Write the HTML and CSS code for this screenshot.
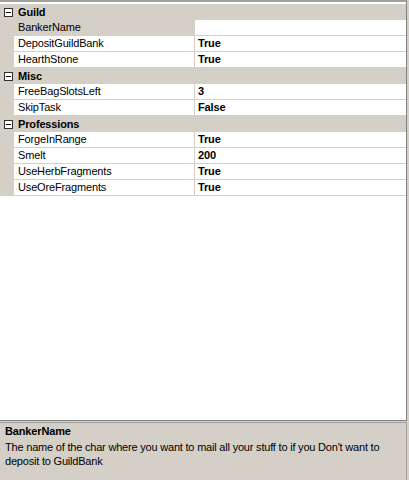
FILE: index.html
```html
<!DOCTYPE html>
<html>
<head>
<meta charset="utf-8">
<link rel="stylesheet" href="styles.css">
</head>
<body>
<div class="window">
  <div class="grid">
    <div class="cat"><span class="box"><span class="minus"></span></span><span class="cat-name">Guild</span></div>
    <div class="row selected"><span class="margin"></span><span class="name">BankerName</span><span class="value"></span></div>
    <div class="row"><span class="margin"></span><span class="name">DepositGuildBank</span><span class="value">True</span></div>
    <div class="row"><span class="margin"></span><span class="name">HearthStone</span><span class="value">True</span></div>
    <div class="cat"><span class="box"><span class="minus"></span></span><span class="cat-name">Misc</span></div>
    <div class="row"><span class="margin"></span><span class="name">FreeBagSlotsLeft</span><span class="value">3</span></div>
    <div class="row"><span class="margin"></span><span class="name">SkipTask</span><span class="value">False</span></div>
    <div class="cat"><span class="box"><span class="minus"></span></span><span class="cat-name">Professions</span></div>
    <div class="row"><span class="margin"></span><span class="name">ForgeInRange</span><span class="value">True</span></div>
    <div class="row"><span class="margin"></span><span class="name">Smelt</span><span class="value">200</span></div>
    <div class="row"><span class="margin"></span><span class="name">UseHerbFragments</span><span class="value">True</span></div>
    <div class="row"><span class="margin"></span><span class="name">UseOreFragments</span><span class="value">True</span></div>
  </div>
  <div class="desc">
    <div class="desc-title">BankerName</div>
    <div class="desc-text">The name of the char where you want to mail all your stuff to if you Don't want to deposit to GuildBank</div>
  </div>
</div>
</body>
</html>
```
FILE: styles.css
```css
html, body {
  margin: 0;
  padding: 0;
  background: #d4d0c8;
}
body {
  width: 409px;
  height: 480px;
  overflow: hidden;
  font-family: "Liberation Sans", Arial, sans-serif;
  font-size: 11px;
  letter-spacing: -0.15px;
  color: #000;
}
.window {
  display: flex;
  flex-direction: column;
  height: 480px;
}
.grid {
  width: 406px;
  height: 416px;
  background: #fff;
  border-top: 2px solid #a0a0a0;
  border-right: 1px solid #808080;
  border-bottom: 1px solid #808080;
  padding-top: 2px;
  box-sizing: content-box;
  display: flex;
  flex-direction: column;
}
.cat {
  height: 16px;
  background: #d4d0c8;
  display: flex;
  align-items: center;
}
.box {
  width: 7px;
  height: 7px;
  border: 1px solid #303030;
  background: #fff;
  margin-left: 4px;
  margin-right: 5px;
  display: flex;
  align-items: center;
  justify-content: center;
}
.minus {
  width: 5px;
  height: 1px;
  background: #000;
}
.cat-name {
  font-weight: bold;
  line-height: 16px;
}
.row {
  height: 16px;
  display: flex;
}
.margin {
  width: 14px;
  background: #d4d0c8;
  flex: none;
}
.name {
  width: 176px;
  flex: none;
  padding-left: 4px;
  border-right: 1px solid #d4d0c8;
  border-bottom: 1px solid #d4d0c8;
  line-height: 15px;
  white-space: nowrap;
}
.selected .name {
  background: #d4d0c8;
}
.value {
  flex: 1;
  padding-left: 3px;
  font-weight: bold;
  border-bottom: 1px solid #d4d0c8;
  line-height: 15px;
}
.desc {
  margin-top: 1px;
  flex: 1;
  border-top: 1px solid #a0a0a0;
  border-right: 1px solid #a0a0a0;
  padding: 1px 0 0 5px;
  box-sizing: border-box;
  width: 407px;
}
.desc-title {
  font-weight: bold;
  line-height: 14px;
}
.desc-text {
  line-height: 14px;
  width: 396px;
  margin-top: 2px;
  letter-spacing: -0.2px;
}
```
